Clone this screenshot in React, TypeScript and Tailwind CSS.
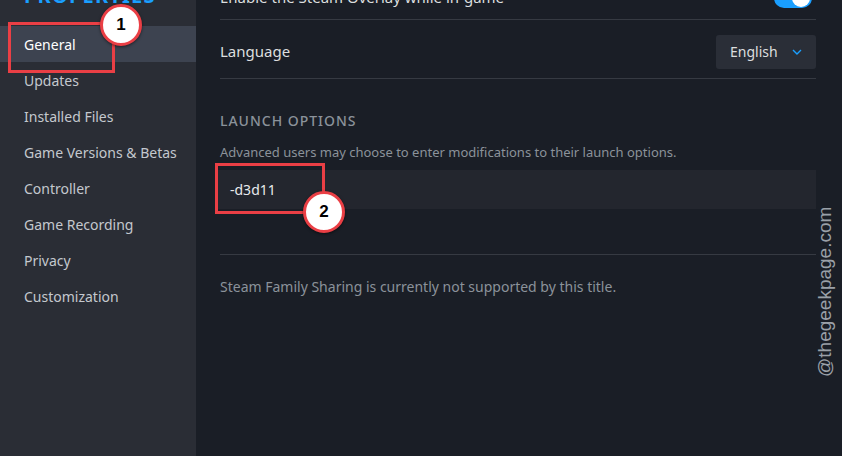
const font = { fontFamily: '"Noto Sans", "Open Sans", sans-serif' };

const items = [
  "General",
  "Updates",
  "Installed Files",
  "Game Versions & Betas",
  "Controller",
  "Game Recording",
  "Privacy",
  "Customization",
];

function Badge({ n, className }: { n: string; className: string }) {
  return (
    <div
      className={`absolute w-[42px] h-[42px] rounded-full bg-white border-[3px] border-[#ea3f45] flex items-center justify-center text-[17px] font-bold text-black shadow-[0_1px_3px_rgba(0,0,0,0.5)] ${className}`}
      style={{ fontFamily: '"Liberation Sans", Arial, sans-serif' }}
    >
      {n}
    </div>
  );
}

export default function App() {
  return (
    <div className="relative w-[842px] h-[456px] overflow-hidden flex bg-[#1a1e26] text-[#dcdedf]" style={font}>
      <aside className="w-[196px] shrink-0 bg-[#2a2d35] flex flex-col">
        <div className="h-[26px] relative">
          <span className="absolute left-[24px] top-[-19px] text-[20px] font-bold tracking-[0.06em] text-[#1a9fff]">PROPERTIES</span>
        </div>
        {items.map((it, i) => (
          <div
            key={it}
            className={`h-[36px] flex items-center pl-[24px] text-[14px] ${i === 0 ? "bg-[#3d4350] text-white" : "text-[#c4c8ce]"}`}
          >
            {it}
          </div>
        ))}
      </aside>

      <main className="flex-1 flex flex-col pl-[24px] pr-[26px]">
        <div className="h-[20px] border-b border-[#363a42] relative">
          <span className="absolute top-[-14px] left-0 text-[15px] text-[#dcdedf]">Enable the Steam Overlay while in-game</span>
          <div className="absolute right-[4px] top-[-12px] w-[38px] h-[20px] rounded-full bg-[#1a9fff] flex items-center justify-end pr-[2px]">
            <div className="w-[18px] h-[18px] rounded-full bg-white" />
          </div>
        </div>

        <div className="h-[59px] pt-[5px] flex items-center justify-between border-b border-[#363a42]">
          <span className="text-[15px] text-[#dcdedf]">Language</span>
          <div className="w-[100px] h-[34px] rounded-[3px] bg-[#2a2e37] flex items-center pl-[14px] pr-[14px] justify-between">
            <span className="text-[14px] text-[#dcdedf]">English</span>
            <svg width="10" height="6" viewBox="0 0 10 6" fill="none">
              <path d="M1 1l4 4 4-4" stroke="#1a9fff" strokeWidth="1.4" />
            </svg>
          </div>
        </div>

        <div className="pt-[31px] text-[14px] font-medium tracking-[0.07em] text-[#8b929a]">LAUNCH OPTIONS</div>
        <div className="mt-[12px] text-[13px] text-[#8b929a]">
          Advanced users may choose to enter modifications to their launch options.
        </div>
        <div className="mt-[7px] -ml-[4px] h-[39px] bg-[#23262e] flex items-center pl-[14px] text-[14px] text-[#e8eaec]">
          -d3d11
        </div>

        <div className="mt-[45px] border-b border-[#363a42]" />
        <div className="mt-[21px] text-[14px] text-[#8b929a]">
          Steam Family Sharing is currently not supported by this title.
        </div>
      </main>

      <div className="absolute left-[8px] top-[22px] w-[107px] h-[51px] border-[3px] border-[#ea3f45]" />
      <Badge n="1" className="left-[100px] top-[4px]" />
      <div className="absolute left-[215px] top-[163px] w-[110px] h-[51px] border-[3px] border-[#ea3f45]" />
      <Badge n="2" className="left-[303px] top-[191px]" />

      <div
        className="absolute left-[813px] top-[377px] origin-top-left -rotate-90 text-[19px] leading-[23px] text-[#9aa0a8] whitespace-nowrap"
        style={{ fontFamily: '"Liberation Sans", Arial, sans-serif' }}
      >
        @thegeekpage.com
      </div>
    </div>
  );
}
